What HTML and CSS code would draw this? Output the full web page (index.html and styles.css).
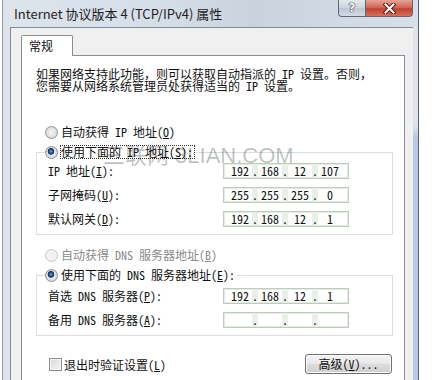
FILE: index.html
```html
<!DOCTYPE html>
<html lang="zh-CN">
<head>
<meta charset="utf-8">
<title>Internet 协议版本 4 (TCP/IPv4) 属性</title>
<link rel="stylesheet" href="styles.css">
</head>
<body>
<div class="window">
  <div class="titlebar">
    <span class="title">Internet 协议版本 4 (TCP/IPv4) 属性</span>
    <div class="caption-btns">
      <span class="cbtn help">?</span>
      <span class="cbtn close"><svg width="15" height="11" viewBox="0 0 15 11"><path d="M3.5 1.5 L11.5 9.5 M11.5 1.5 L3.5 9.5" stroke="#5a1d16" stroke-width="4" stroke-linecap="square" fill="none"/><path d="M3.5 1.5 L11.5 9.5 M11.5 1.5 L3.5 9.5" stroke="#ffffff" stroke-width="2" stroke-linecap="square" fill="none"/></svg></span>
    </div>
  </div>
  <div class="client">
    <div class="tabs"><div class="tab">常规</div><div class="tabfill"></div></div>
    <div class="panel">
      <p class="intro">如果网络支持此功能，则可以获取自动指派的 IP 设置。否则，<br>您需要从网络系统管理员处获得适当的 IP 设置。</p>
      <div class="opt"><span class="radio"></span><span class="otext">自动获得 IP 地址(<u>O</u>)</span></div>
      <fieldset class="group g1">
        <legend><span class="opt"><span class="radio checked"></span><span class="otext focus">使用下面的 IP 地址(<u>S</u>):</span></span></legend>
        <div class="frow"><span class="lbl">IP 地址(<u>I</u>):</span><span class="ip"><span class="seg">192</span><span class="dot">.</span><span class="seg">168</span><span class="dot">.</span><span class="seg">12</span><span class="dot">.</span><span class="seg">107</span></span></div>
        <div class="frow"><span class="lbl">子网掩码(<u>U</u>):</span><span class="ip"><span class="seg">255</span><span class="dot">.</span><span class="seg">255</span><span class="dot">.</span><span class="seg">255</span><span class="dot">.</span><span class="seg">0</span></span></div>
        <div class="frow"><span class="lbl">默认网关(<u>D</u>):</span><span class="ip"><span class="seg">192</span><span class="dot">.</span><span class="seg">168</span><span class="dot">.</span><span class="seg">12</span><span class="dot">.</span><span class="seg">1</span></span></div>
      </fieldset>
      <div class="opt disabled gap"><span class="radio"></span><span class="otext">自动获得 DNS 服务器地址(<u>B</u>)</span></div>
      <fieldset class="group g2">
        <legend><span class="opt"><span class="radio checked"></span><span class="otext">使用下面的 DNS 服务器地址(<u>E</u>):</span></span></legend>
        <div class="frow"><span class="lbl">首选 DNS 服务器(<u>P</u>):</span><span class="ip"><span class="seg">192</span><span class="dot">.</span><span class="seg">168</span><span class="dot">.</span><span class="seg">12</span><span class="dot">.</span><span class="seg">1</span></span></div>
        <div class="frow"><span class="lbl">备用 DNS 服务器(<u>A</u>):</span><span class="ip"><span class="seg"></span><span class="dot">.</span><span class="seg"></span><span class="dot">.</span><span class="seg"></span><span class="dot">.</span><span class="seg"></span></span></div>
      </fieldset>
      <div class="bottom">
        <span class="check"></span><span class="ctext">退出时验证设置(<u>L</u>)</span>
        <span class="btn">高级(<u>V</u>)...</span>
      </div>
    </div>
  </div>
  <div class="watermark">三联网 3LIAN.COM</div>
</div>
</body>
</html>
```

FILE: styles.css
```css
html, body {
  margin: 0;
  padding: 0;
}
body {
  width: 432px;
  height: 380px;
  overflow: hidden;
  background: #ffffff;
  font-family: "Noto Sans Mono CJK SC", "Noto Sans CJK SC", sans-serif;
  font-size: 12px;
  color: #111;
}
u {
  text-decoration: underline;
  text-underline-offset: 1px;
}
.window {
  position: relative;
  margin-left: 2px;
  width: 415px;
  border-left: 1px solid #8d99a6;
  border-right: 1px solid #56606b;
  background:
    linear-gradient(to bottom, rgba(185, 203, 230, 0) 0, rgba(185, 203, 230, 0) 125px, #b7c9e6 138px, #b7c9e6 100%) right top / 5px 100% no-repeat,
    #dfe4ea;
  display: flex;
  flex-direction: column;
}
.titlebar {
  height: 27px;
  display: flex;
  align-items: flex-start;
  padding-left: 11px;
  background: linear-gradient(to right, #dde4ec 0, #d5dde7 40%, #c9d2dd 60%, #d8dfe8 100%);
}
.title {
  font-family: "Noto Sans CJK SC", sans-serif;
  font-size: 13px;
  line-height: 27px;
  color: #1e1e1e;
  white-space: nowrap;
}
.caption-btns {
  margin-left: auto;
  margin-right: 5px;
  display: flex;
}
.cbtn {
  height: 17px;
  box-sizing: border-box;
  border: 1px solid #5d6977;
  border-top: none;
  display: flex;
  align-items: center;
  justify-content: center;
}
.help {
  width: 27px;
  border-right: none;
  border-radius: 0 0 0 4px;
  background: linear-gradient(#e3e8ee, #cbd3dd 50%, #bcc6d2 51%, #d3dbe5);
  color: #f4f6f8;
  font-family: "DejaVu Sans", sans-serif;
  font-weight: bold;
  font-size: 12px;
  line-height: 16px;
  text-shadow: 0 0 1px #2e3640, 0 0 1px #2e3640, 0 0 1px #2e3640;
}
.close {
  width: 48px;
  border-radius: 0 0 4px 0;
  background: linear-gradient(#e6a496, #d0685a 45%, #c0422f 55%, #d4705c);
}
.close svg {
  display: block;
}
.client {
  margin: 0 5px 0 7px;
  border-top: 1px solid #7f8c9b;
  border-left: 1px solid #7f8c9b;
  background: #f0f0f0;
  padding: 7px 8px 0 10px;
}
.tabs {
  display: flex;
  height: 21px;
}
.tab {
  width: 52px;
  padding-left: 7px;
  height: 21px;
  box-sizing: border-box;
  border: 1px solid #898c95;
  border-bottom: none;
  border-radius: 2px 2px 0 0;
  background: #ffffff;
  line-height: 20px;
  font-family: "Noto Sans CJK SC", sans-serif;
}
.tabfill {
  flex: 1;
  height: 21px;
  box-sizing: border-box;
  border-bottom: 1px solid #898c95;
}
.panel {
  border: 1px solid #898c95;
  border-top: none;
  background: #ffffff;
  padding: 12px 11px 20px 14px;
}
.intro {
  margin: 0 0 30px;
  line-height: 12px;
  white-space: nowrap;
}
.opt {
  display: flex;
  align-items: center;
  height: 20px;
  padding-left: 9px;
  white-space: nowrap;
}
legend .opt {
  padding-left: 0;
}
.otext {
  margin-left: 3px;
  line-height: 12px;
}
.focus {
  margin-left: 2px;
  border: 1px dotted #333;
  padding-right: 1px;
}
.disabled {
  color: #8a8a8a;
}
.gap {
  margin-top: 10px;
}
.radio {
  width: 13px;
  height: 13px;
  box-sizing: border-box;
  border-radius: 50%;
  border: 1px solid #8e8f8f;
  background: radial-gradient(circle at 50% 50%, #f6f6f6 0, #e2e2e2 55%, #cfcfcf 100%);
  flex: none;
}
.radio.checked {
  background:
    radial-gradient(circle at 45% 40%, #7fb0e0 0, #2a5fa0 1.5px, #0e2f5e 3px, rgba(0,0,0,0) 3.6px),
    radial-gradient(circle at 50% 50%, #f6f6f6 0, #dedede 60%, #cccccc 100%);
}
.disabled .radio {
  border-color: #c6c6c6;
  background: #f2f2f2;
}
.group {
  margin: 0;
  min-width: 0;
  border: 1px solid #d5dfe5;
  padding: 0 0 7px 8px;
}
.g1 {
  padding-top: 1px;
}
.g2 {
  padding-top: 3px;
}
.group legend {
  padding: 0 1px 0 0;
  margin: 0;
}
.frow {
  display: flex;
  align-items: center;
  height: 16px;
  padding-left: 3px;
  white-space: nowrap;
}
.frow + .frow {
  margin-top: 8px;
}
.lbl {
  width: 175px;
  flex: none;
  line-height: 12px;
}
.ip {
  display: flex;
  width: 126px;
  height: 16px;
  box-sizing: border-box;
  border: 1px solid #bccdbc;
  box-shadow: inset 0 0 0 1px #e3ece3;
  padding-left: 4px;
  background: #ffffff;
}
.seg {
  width: 24px;
  text-align: center;
  line-height: 14px;
}
.dot {
  width: 6px;
  text-align: right;
  line-height: 14px;
  background: #e8f0e8;
}
.bottom {
  display: flex;
  align-items: center;
  height: 20px;
  margin-top: 18px;
  white-space: nowrap;
}
.check {
  width: 13px;
  height: 13px;
  box-sizing: border-box;
  margin-left: 13px;
  border: 1px solid #8e8f8f;
  background: linear-gradient(135deg, #d8d8d8, #f4f4f4);
  box-shadow: inset 0 0 0 1px #f4f4f4;
  flex: none;
}
.ctext {
  margin-left: 2px;
}
.btn {
  margin-left: auto;
  margin-right: 1px;
  width: 87px;
  height: 20px;
  box-sizing: border-box;
  border: 1px solid #707070;
  border-radius: 3px;
  background: linear-gradient(#f2f2f2, #ebebeb 45%, #dddddd 50%, #cfcfcf);
  box-shadow: inset 0 0 0 1px #fcfcfc;
  display: flex;
  align-items: center;
  justify-content: center;
  line-height: 12px;
}
.watermark {
  position: absolute;
  left: 100px;
  top: 145px;
  font-family: "Liberation Sans", "Noto Sans CJK SC", sans-serif;
  font-size: 22px;
  line-height: 22px;
  color: rgba(0, 0, 0, 0.25);
  white-space: nowrap;
  pointer-events: none;
}
```
